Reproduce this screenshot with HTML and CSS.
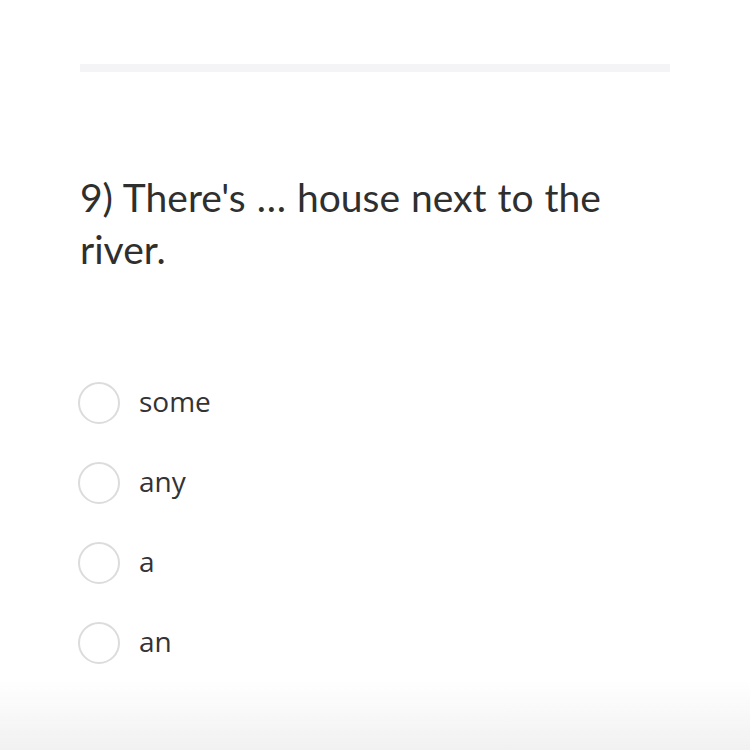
FILE: index.html
```html
<!DOCTYPE html>
<html>
<head>
<meta charset="utf-8">
<link rel="stylesheet" href="styles.css">
</head>
<body>
<div class="page">
  <div class="progress"></div>
  <h1 class="question">9) There's … house next to the river.</h1>
  <ul class="options">
    <li class="option"><span class="radio"></span><span class="label">some</span></li>
    <li class="option"><span class="radio"></span><span class="label">any</span></li>
    <li class="option"><span class="radio"></span><span class="label">a</span></li>
    <li class="option"><span class="radio"></span><span class="label">an</span></li>
  </ul>
</div>
<div class="footer-shade"></div>
</body>
</html>
```
FILE: styles.css
```css
html, body {
  margin: 0;
  padding: 0;
  background: #fff;
  height: 100%;
  overflow: hidden;
}
body {
  font-family: Lato, "Open Sans", sans-serif;
  color: #323232;
}
.page {
  padding: 64px 80px 0 80px;
}
.progress {
  height: 8px;
  background: #f4f4f7;
}
.question {
  margin: 99px 0 0 0;
  width: 560px;
  font-weight: 400;
  font-size: 39px;
  line-height: 52px;
  word-spacing: 1px;
  color: #2f2f2f;
}
.options {
  list-style: none;
  margin: 107px 0 0 0;
  padding: 0;
  display: flex;
  flex-direction: column;
  gap: 38px;
}
.option {
  display: flex;
  align-items: center;
  gap: 19px;
  height: 42px;
}
.radio {
  width: 38px;
  height: 38px;
  border: 2px solid #dcdcdc;
  border-radius: 50%;
  flex: none;
  margin-left: -2px;
}
.label {
  font-family: "Open Sans", sans-serif;
  font-size: 28px;
  color: #333;
  position: relative;
  top: -2px;
}
.footer-shade {
  position: fixed;
  left: 0;
  right: 0;
  bottom: 0;
  height: 70px;
  background: linear-gradient(to bottom, rgba(242,242,242,0), #f1f1f1);
}
```
